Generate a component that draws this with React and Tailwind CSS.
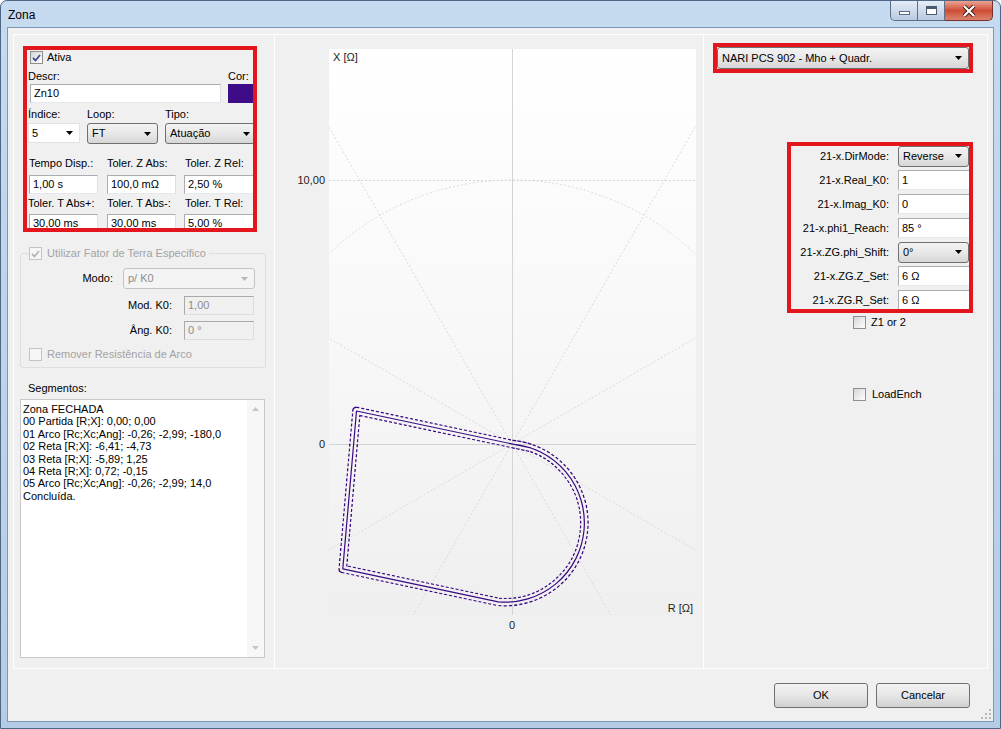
import React from "react";

// small pieces reused across the dialog
const Arrow = ({ c = "#000" }) => (
  <svg width="7" height="4" viewBox="0 0 7 4" className="shrink-0">
    <path d="M0 0h7L3.5 4z" fill={c} />
  </svg>
);

const Check = ({ on, dis }) => (
  <span
    className={
      dis
        ? "w-[13px] h-[13px] shrink-0 border border-[#c4c4c4] bg-[#f6f6f6] flex items-center justify-center"
        : "w-[13px] h-[13px] shrink-0 border border-[#8e8f8f] bg-linear-to-br from-[#d6d6d6] to-white flex items-center justify-center"
    }
  >
    {on && (
      <svg width="9" height="8" viewBox="0 0 9 8">
        <path d="M1 4l2.5 2.5L8 1" stroke={dis ? "#b4b4b4" : "#3b4f8e"} strokeWidth="1.8" fill="none" />
      </svg>
    )}
  </span>
);

const Input = ({ className, children }) => (
  <div className={`h-[19px] shrink-0 border border-[#abadb3] border-b-[#e3e9ef] border-r-[#dbdfe6] bg-white flex items-center pl-[3px] whitespace-nowrap overflow-hidden ${className}`}>
    {children}
  </div>
);

const Combo = ({ className, children }) => (
  <div className={`h-[21px] shrink-0 rounded-[3px] border border-[#707070] bg-linear-to-b from-[#f3f3f3] via-[#e8e8e8] to-[#d6d6d6] flex items-center justify-between pl-[4px] pr-[6px] whitespace-nowrap overflow-hidden ${className}`}>
    <span>{children}</span>
    <Arrow />
  </div>
);

const segs = [
  "Zona FECHADA",
  "00 Partida [R;X]: 0,00; 0,00",
  "01 Arco [Rc;Xc;Ang]: -0,26; -2,99; -180,0",
  "02 Reta [R;X]: -6,41; -4,73",
  "03 Reta [R;X]: -5,89; 1,25",
  "04 Reta [R;X]: 0,72; -0,15",
  "05 Arco [Rc;Xc;Ang]: -0,26; -2,99; 14,0",
  "Concluída.",
];

const params = [
  ["21-x.DirMode:", "Reverse", true],
  ["21-x.Real_K0:", "1"],
  ["21-x.Imag_K0:", "0"],
  ["21-x.phi1_Reach:", "85 °"],
  ["21-x.ZG.phi_Shift:", "0°", true],
  ["21-x.ZG.Z_Set:", "6 Ω"],
  ["21-x.ZG.R_Set:", "6 Ω"],
];

// chart, drawn in page coordinates
const OX = 512;
const OY = 444;
const K = 26.4;
const px = (r) => OX + K * r;
const py = (x) => OY - K * x;

const RAD = 3.0 * K;
const zone = [
  `M${OX} ${OY}`,
  `A${RAD} ${RAD} 0 1 1 ${px(-0.52)} ${py(-5.98)}`,
  `L${px(-6.41)} ${py(-4.73)}`,
  `L${px(-5.89)} ${py(1.25)}`,
  `L${px(0.72)} ${py(-0.15)}`,
  `A${RAD} ${RAD} 0 0 0 ${OX} ${OY}`,
  "Z",
].join(" ");

const Chart = () => {
  const rays = [30, 60, 120, 150, 210, 240, 300, 330].map((a) => {
    const t = (a * Math.PI) / 180;
    return [OX + 900 * Math.cos(t), OY - 900 * Math.sin(t)];
  });
  const purple = "#3b0a82";
  return (
    <svg width="428" height="633" viewBox="275 35 428 633" className="block">
      <defs>
        <linearGradient id="plotbg" x1="0" y1="0" x2="0" y2="1">
          <stop offset="0" stopColor="#ffffff" />
          <stop offset="0.5" stopColor="#f8f8f8" />
          <stop offset="1" stopColor="#efefef" />
        </linearGradient>
        <clipPath id="plotclip">
          <rect x="329" y="49" width="367" height="566" />
        </clipPath>
        <mask id="band" maskUnits="userSpaceOnUse" x="275" y="35" width="428" height="633">
          <path d={zone} fill="none" stroke="white" strokeWidth="9" strokeLinejoin="round" />
          <path d={zone} fill="none" stroke="black" strokeWidth="6.2" strokeLinejoin="round" />
        </mask>
      </defs>
      <rect x="329" y="49" width="367" height="566" fill="url(#plotbg)" />
      <g clipPath="url(#plotclip)">
        {rays.map(([x, y], i) => (
          <line key={i} x1={OX} y1={OY} x2={x} y2={y} stroke="#dadada" strokeDasharray="2 2" />
        ))}
        <circle cx={OX} cy={OY} r="264" fill="none" stroke="#dadada" strokeDasharray="2 2" />
        <line x1="329" y1="180.5" x2="696" y2="180.5" stroke="#d6d6d6" strokeDasharray="2 2" />
        <line x1={OX + 0.5} y1="49" x2={OX + 0.5} y2="615" stroke="#d4d4d4" />
        <line x1="329" y1={OY + 0.5} x2="696" y2={OY + 0.5} stroke="#d4d4d4" />
        <path d={zone} fill="none" stroke={purple} strokeWidth="9" strokeDasharray="3 2" mask="url(#band)" />
        <path d={zone} fill="none" stroke={purple} strokeWidth="1.2" strokeLinejoin="round" />
      </g>
      <g fontFamily="Liberation Sans, Arial, sans-serif" fontSize="11" fill="#222">
        <text x="333" y="61">X [Ω]</text>
        <text x="325" y="184" textAnchor="end">10,00</text>
        <text x="325" y="448" textAnchor="end">0</text>
        <text x="693" y="612" textAnchor="end">R [Ω]</text>
        <text x={OX} y="629" textAnchor="middle">0</text>
      </g>
    </svg>
  );
};

const Caption = () => (
  <div className="flex self-start">
    <div className="w-[28px] h-[20px] border border-[#5c6f86] border-t-0 rounded-bl-[5px] bg-linear-to-b from-[#e4ecf6] to-[#b9cbe0] flex items-center justify-center">
      <span className="w-[11px] h-[4px] mt-[5px] border border-[#5a6b80] bg-white" />
    </div>
    <div className="w-[27px] h-[20px] border-b border-r border-[#5c6f86] bg-linear-to-b from-[#e4ecf6] to-[#b9cbe0] flex items-center justify-center">
      <span className="w-[11px] h-[9px] border border-[#4a5a70] border-t-[3px] bg-white" />
    </div>
    <div className="w-[48px] h-[20px] border-b border-r border-[#7a3026] rounded-br-[5px] bg-linear-to-b from-[#e8a494] via-[#cf4b35] to-[#d9826c] flex items-center justify-center">
      <svg width="14" height="12" viewBox="0 0 14 12">
        <path d="M2 1l10 10M12 1L2 11" stroke="#3a1510" strokeWidth="4" />
        <path d="M2 1l10 10M12 1L2 11" stroke="#fff" strokeWidth="2.2" />
      </svg>
    </div>
  </div>
);

export default function App() {
  return (
    <div className="w-[1001px] h-[729px] flex flex-col bg-linear-to-b from-[#c6daf0] to-[#b5cce7] border border-[#4d6785] rounded-t-[7px] overflow-hidden font-['Liberation_Sans',Arial,sans-serif] text-[11px] leading-[13px] text-black">
      {/* title bar */}
      <div className="h-[26px] shrink-0 flex justify-between pl-[7px] pr-[7px]">
        <span className="text-[12px] leading-[26px] mt-[1px]">Zona</span>
        <Caption />
      </div>

      {/* client area */}
      <div className="flex-1 ml-[6px] mr-[6px] mb-[6px] border border-[#7d98b6] bg-[#f0f0f0] flex flex-col relative">
        <div className="flex pt-[6px] pl-[5px]">
          {/* left panel */}
          <div className="w-[262px] h-[635px] border border-white flex flex-col">
            <div className="ml-[9px] mt-[11px] w-[234px] h-[186px] border-4 border-[#e3161d] overflow-hidden flex flex-col">
              <div className="flex items-center gap-[4px] pl-[3px] mt-[1px] h-[14px]">
                <Check on />
                <span>Ativa</span>
              </div>
              <div className="flex mt-[6px] pl-[1px] h-[13px]">
                <span className="w-[200px]">Descr:</span>
                <span>Cor:</span>
              </div>
              <div className="flex mt-[1px] ml-[3px] gap-[7px]">
                <Input className="w-[191px]">Zn10</Input>
                <div className="w-[30px] h-[19px] shrink-0 bg-[#3f0c88]" />
              </div>
              <div className="flex mt-[5px] pl-[1px] h-[13px]">
                <span className="w-[59px]">Índice:</span>
                <span className="w-[78px]">Loop:</span>
                <span>Tipo:</span>
              </div>
              <div className="flex mt-[2px] ml-[1px] gap-[7px]">
                <div className="w-[52px] h-[20px] shrink-0 bg-white border border-[#e2e2e2] flex items-center justify-between pl-[3px] pr-[6px]">
                  <span>5</span>
                  <Arrow />
                </div>
                <Combo className="w-[71px] h-[20px]">FT</Combo>
                <Combo className="w-[92px] h-[20px]">Atuação</Combo>
              </div>
              <div className="flex mt-[13px] pl-[2px] h-[13px]">
                <span className="w-[78px]">Tempo Disp.:</span>
                <span className="w-[78px]">Toler. Z Abs:</span>
                <span>Toler. Z Rel:</span>
              </div>
              <div className="flex mt-[5px] ml-[2px]">
                <Input className="w-[69px]">1,00 s</Input>
                <Input className="w-[69px] ml-[9px]">100,0 mΩ</Input>
                <Input className="w-[70px] ml-[8px]">2,50 %</Input>
              </div>
              <div className="flex mt-[3px] pl-[1px] h-[13px]">
                <span className="w-[79px]">Toler. T Abs+:</span>
                <span className="w-[78px]">Toler. T Abs-:</span>
                <span>Toler. T Rel:</span>
              </div>
              <div className="flex mt-[4px] ml-[2px]">
                <Input className="w-[69px]">30,00 ms</Input>
                <Input className="w-[69px] ml-[9px]">30,00 ms</Input>
                <Input className="w-[70px] ml-[8px]">5,00 %</Input>
              </div>
            </div>

            <fieldset className="ml-[6px] mt-[15px] w-[246px] h-[121px] border border-[#dedede] rounded-[3px]">
              <legend className="ml-[8px] pr-[3px]">
                <span className="flex items-center gap-[5px] h-[13px] text-[#a3a3a3]">
                  <Check on dis />
                  Utilizar Fator de Terra Especifico
                </span>
              </legend>
              <div className="flex items-center mt-[8px] h-[21px]">
                <span className="w-[92px] text-right">Modo:</span>
                <div className="ml-[10px] w-[132px] h-[21px] rounded-[3px] border border-[#c2c5c8] bg-[#f4f4f4] flex items-center justify-between pl-[4px] pr-[6px] text-[#8d8d8d]">
                  <span>p/ K0</span>
                  <Arrow c="#b8b8b8" />
                </div>
              </div>
              <div className="flex items-center mt-[7px] h-[19px]">
                <span className="w-[151px] text-right">Mod. K0:</span>
                <div className="ml-[12px] w-[70px] h-[19px] border border-[#a9a9a9] border-r-[#dedede] border-b-[#dedede] flex items-center pl-[3px] text-[#8d8d8d]">1,00</div>
              </div>
              <div className="flex items-center mt-[6px] h-[19px]">
                <span className="w-[151px] text-right">Âng. K0:</span>
                <div className="ml-[12px] w-[70px] h-[19px] border border-[#a9a9a9] border-r-[#dedede] border-b-[#dedede] flex items-center pl-[3px] text-[#8d8d8d]">0 °</div>
              </div>
              <div className="flex items-center gap-[5px] mt-[8px] ml-[8px] h-[13px] text-[#a3a3a3]">
                <Check dis />
                Remover Resistência de Arco
              </div>
            </fieldset>

            <span className="ml-[14px] mt-[14px] h-[12px]">Segmentos:</span>
            <div className="ml-[6px] mt-[5px] w-[245px] h-[259px] bg-white border border-[#c9c9c9] flex">
              <div className="flex-1 pl-[2px] pt-[3px] leading-[12.4px] whitespace-nowrap overflow-hidden">
                {segs.map((s) => (
                  <div key={s}>{s}</div>
                ))}
              </div>
              <div className="w-[17px] bg-[#f7f7f7] flex flex-col justify-between items-center py-[7px]">
                <svg width="7" height="4" viewBox="0 0 7 4">
                  <path d="M0 4h7L3.5 0z" fill="#c6c6c6" />
                </svg>
                <svg width="7" height="4" viewBox="0 0 7 4">
                  <path d="M0 0h7L3.5 4z" fill="#c6c6c6" />
                </svg>
              </div>
            </div>
          </div>

          {/* chart panel */}
          <div className="w-[429px] h-[635px] border-y border-r border-white">
            <Chart />
          </div>

          {/* right panel */}
          <div className="w-[284px] h-[635px] border-y border-r border-white flex flex-col">
            <div className="ml-[9px] mt-[8px] w-[260px] h-[30px] border-4 border-[#e3161d]">
              <Combo className="w-[252px] h-[22px]">NARI PCS 902 - Mho + Quadr.</Combo>
            </div>
            <div className="ml-[83px] mt-[69px] w-[186px] h-[171px] border-4 border-[#e3161d] overflow-hidden flex flex-col gap-[4px]">
              {params.map(([label, value, isCombo]) => (
                <div key={label} className="flex items-center h-[20px] shrink-0">
                  <span className="w-[98px] shrink-0 text-right whitespace-nowrap">{label}</span>
                  {isCombo ? (
                    <Combo className="ml-[9px] w-[71px] h-[20px]">{value}</Combo>
                  ) : (
                    <Input className="ml-[9px] w-[80px] h-[20px]">{value}</Input>
                  )}
                </div>
              ))}
            </div>
            <div className="flex items-center gap-[5px] ml-[149px] mt-[3px] h-[13px]">
              <Check />
              Z1 or 2
            </div>
            <div className="flex items-center gap-[6px] ml-[149px] mt-[59px] h-[13px]">
              <Check />
              LoadEnch
            </div>
          </div>
        </div>

        {/* buttons */}
        <div className="flex justify-end gap-[8px] pr-[23px] mt-[14px]">
          <button className="w-[94px] h-[25px] rounded-[3px] border border-[#707070] bg-linear-to-b from-[#f2f2f2] via-[#e6e6e6] to-[#d0d0d0] text-[11px]">OK</button>
          <button className="w-[94px] h-[25px] rounded-[3px] border border-[#707070] bg-linear-to-b from-[#f2f2f2] via-[#e6e6e6] to-[#d0d0d0] text-[11px]">Cancelar</button>
        </div>

        {/* size grip */}
        <svg width="11" height="11" viewBox="0 0 11 11" className="absolute right-[1px] bottom-[1px]">
          {[[8, 0], [8, 4], [4, 4], [8, 8], [4, 8], [0, 8]].map(([x, y]) => (
            <rect key={`${x}-${y}`} x={x} y={y} width="2" height="2" fill="#b8b8b8" />
          ))}
        </svg>
      </div>
    </div>
  );
}
